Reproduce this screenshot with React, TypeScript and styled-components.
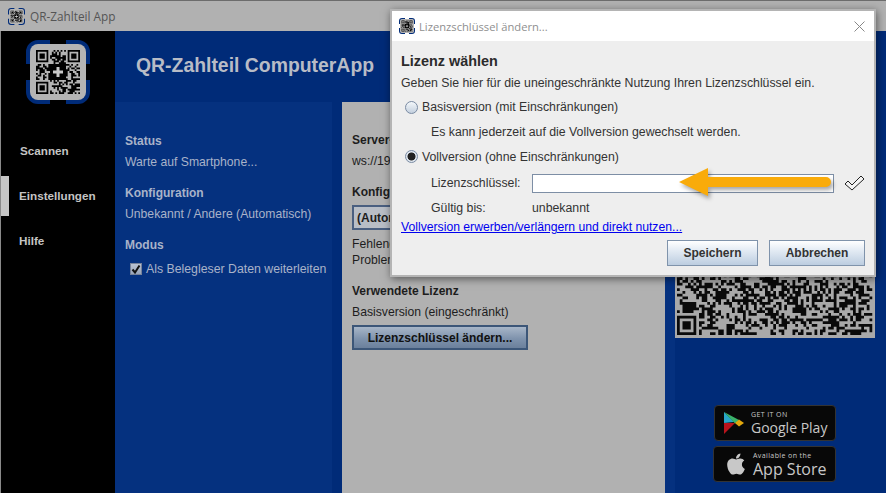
import React from 'react';
import styled, { createGlobalStyle } from 'styled-components';
import { FaApple } from 'react-icons/fa';

const GlobalStyle = createGlobalStyle`
  html, body {
    margin: 0;
    padding: 0;
    background: #000;
    overflow: hidden;
  }
  * {
    box-sizing: border-box;
  }
`;

const qrPath = (cells: number, seed: number, x0: number, y0: number, unit: number) => {
  let s = seed;
  const next = () => {
    s = (s * 1664525 + 1013904223) % 4294967296;
    return s / 4294967296;
  };
  const inFinder = (x: number, y: number) =>
    (x < 8 && y < 8) || (x >= cells - 8 && y < 8) || (x < 8 && y >= cells - 8);
  const mid = cells / 2;
  let d = '';
  const box = (x: number, y: number, w: number, h: number) => {
    d += `M${x0 + x * unit} ${y0 + y * unit}h${w * unit}v${h * unit}h${-w * unit}z`;
  };
  for (let y = 0; y < cells; y++) {
    for (let x = 0; x < cells; x++) {
      if (inFinder(x, y)) continue;
      if (cells < 40 && Math.abs(x - mid + 0.5) < 5 && Math.abs(y - mid + 0.5) < 5) continue;
      if (next() > 0.52) box(x, y, 1, 1);
    }
  }
  const finder = (x: number, y: number) => {
    box(x, y, 7, 1);
    box(x, y + 6, 7, 1);
    box(x, y + 1, 1, 5);
    box(x + 6, y + 1, 1, 5);
    box(x + 2, y + 2, 3, 3);
  };
  finder(0, 0);
  finder(cells - 7, 0);
  finder(0, cells - 7);
  return d;
};

const LOGO_QR = qrPath(25, 77, 10, 10, 1.76);
const BIG_QR = qrPath(71, 4242, 2, 1.75, 2.75);

const AppLogo: React.FC<{ size: number }> = ({ size }) => (
  <svg width={size} height={size} viewBox="0 0 64 64">
    <g fill="none" stroke="#002b78" strokeWidth="6">
      <path d="M3 24V12a9 9 0 0 1 9-9h12" />
      <path d="M40 3h12a9 9 0 0 1 9 9v12" />
      <path d="M61 40v12a9 9 0 0 1-9 9H40" />
      <path d="M24 61H12a9 9 0 0 1-9-9V40" />
    </g>
    <rect x="4" y="4" width="56" height="56" rx="8" fill="#b4b4b4" />
    <path d={LOGO_QR} fill="#000" />
    <rect x="24" y="24" width="16" height="16" fill="#000" />
    <path d="M30.500 27h3v3.500H37v3h-3.500V37h-3v-3.500H27v-3h3.500z" fill="#c8c8c8" />
  </svg>
);

const AppWindow = styled.div`
  position: relative;
  width: 886px;
  height: 493px;
  overflow: hidden;
  display: flex;
  flex-direction: column;
  border-top: 1px solid #6c6c6c;
  font-family: 'Liberation Sans', Arial, sans-serif;
  font-size: 12px;
`;

const TitleBar = styled.div`
  height: 30px;
  flex: none;
  display: flex;
  align-items: center;
  gap: 5px;
  padding-left: 8px;
  background: #b1b1b1;
  color: #555;
  font-family: 'Open Sans', 'Liberation Sans', sans-serif;
  font-size: 11.8px;
`;

const WindowBody = styled.div`
  flex: 1;
  display: flex;
  min-height: 0;
  border-left: 1px solid #8a8a8a;
`;

const Sidebar = styled.nav`
  width: 114px;
  flex: none;
  background: #000;
  display: flex;
  flex-direction: column;
`;

const LogoSlot = styled.div`
  height: 97px;
  padding: 9px 0 0 25px;
`;

const NavItem = styled.div<{ $active?: boolean; $inset?: number }>`
  height: 45px;
  display: flex;
  align-items: center;
  padding-left: ${(p) => (p.$active ? '0' : `${p.$inset ?? 18}px`)};
  color: #c4c4c4;
  font-weight: bold;
  font-size: 11.7px;
  &::before {
    content: '';
    display: ${(p) => (p.$active ? 'block' : 'none')};
    width: 8px;
    height: 40px;
    margin-right: 10px;
    background: #c6c6c6;
  }
`;

const Main = styled.div`
  flex: 1;
  display: flex;
  flex-direction: column;
  background: #002b78;
`;

const Header = styled.header`
  height: 71px;
  flex: none;
  padding: 22px 0 0 21px;
  color: #b8bcc6;
  font-size: 19.4px;
  line-height: 24px;
  font-weight: bold;
`;

const Columns = styled.div`
  flex: 1;
  display: flex;
  min-height: 0;
`;

const StatusPanel = styled.section`
  width: 217px;
  flex: none;
  background: #05317f;
  padding: 31px 0 0 10px;
  color: #a9b3c9;
`;

const Label = styled.div<{ $gap?: number }>`
  font-weight: bold;
  font-size: 12px;
  line-height: 16px;
  margin-top: ${(p) => p.$gap ?? 0}px;
`;

const Value = styled.div<{ $flush?: boolean }>`
  font-size: 12.2px;
  line-height: 16px;
  margin: ${(p) => (p.$flush ? '5px 0 0' : '5px 0 15px')};
  white-space: nowrap;
`;

const CheckRow = styled.label`
  display: flex;
  align-items: center;
  gap: 4px;
  margin: 9px 0 0 5px;
  font-size: 12.3px;
  white-space: nowrap;
`;

const CheckBox = styled.span`
  width: 12px;
  height: 12px;
  display: flex;
  align-items: center;
  justify-content: center;
  background: linear-gradient(#b9c2d2, #9aa6ba);
  border: 1px solid #76829a;
`;

const GrayPanel = styled.section`
  width: 323px;
  flex: none;
  margin-left: 10px;
  background: #b1b1b1;
  padding: 30px 0 0 10px;
  color: #1d1d1d;
`;

const SelectBox = styled.div`
  width: 300px;
  height: 25px;
  margin-top: 5px;
  padding-left: 3px;
  display: flex;
  align-items: center;
  border: 2px solid #4a5f80;
  background: #b9bec6;
  font-weight: bold;
`;

const NoteGroup = styled.div`
  margin-top: 6px;
`;

const Note = styled.div`
  font-size: 12.2px;
  line-height: 16px;
  white-space: nowrap;
`;

const LicenseButton = styled.button`
  width: 176px;
  height: 25px;
  margin-top: 5px;
  padding: 0;
  display: block;
  border: 2px solid #3c5678;
  background: linear-gradient(#a8b6c8, #7f93ad 55%, #6b809c);
  font: bold 12px 'Liberation Sans', Arial, sans-serif;
  color: #111;
`;

const StoreColumn = styled.aside`
  flex: 1;
  border-left: 10px solid #05317f;
  padding: 36px 0 0 0;
  display: flex;
  flex-direction: column;
`;

const QrCard = styled.div`
  width: 200px;
  height: 200px;
  flex: none;
  background: #a9a9a9;
`;

const Badges = styled.div`
  margin: 67px 0 0 38px;
  display: flex;
  flex-direction: column;
  align-items: flex-end;
  gap: 5px;
  width: 123px;
`;

const Badge = styled.div<{ $apple?: boolean }>`
  width: ${(p) => (p.$apple ? 123 : 122)}px;
  height: 36px;
  display: flex;
  align-items: center;
  gap: ${(p) => (p.$apple ? 5 : 6)}px;
  padding-left: ${(p) => (p.$apple ? 10 : 8)}px;
  background: #080808;
  border: 1px solid #333;
  border-radius: 4px;
  color: #c8c8c8;
  font-family: 'Open Sans', 'Liberation Sans', sans-serif;
`;

const BadgeText = styled.div`
  display: flex;
  flex-direction: column;
`;

const BadgeSmall = styled.span`
  font-size: 7px;
  line-height: 10px;
  letter-spacing: 0.4px;
  white-space: nowrap;
`;

const BadgeBig = styled.span<{ $apple?: boolean }>`
  font-size: ${(p) => (p.$apple ? 16 : 14)}px;
  line-height: ${(p) => (p.$apple ? 17 : 16)}px;
  white-space: nowrap;
`;

const Dialog = styled.div`
  position: absolute;
  left: 390px;
  top: 8px;
  width: 486px;
  height: 268px;
  background: #eeeeee;
  border: 2px solid #b4b4b4;
  box-shadow: 1px 2px 8px rgba(0, 0, 0, 0.5);
  color: #333;
  display: flex;
  flex-direction: column;
`;

const DialogTitle = styled.div`
  height: 30px;
  flex: none;
  background: #fff;
  display: flex;
  align-items: center;
  gap: 4px;
  padding: 0 8px 0 7px;
  color: #8f8f8f;
  font-family: 'Open Sans', 'Liberation Sans', sans-serif;
  font-size: 11.2px;
`;

const CloseIcon = styled.svg`
  margin-left: auto;
  margin-right: 1px;
`;

const DialogBody = styled.div`
  flex: 1;
  padding: 12px 9px 0 9px;
  font-size: 12.3px;
  display: flex;
  flex-direction: column;
`;

const DialogHeading = styled.div`
  font-size: 14.4px;
  line-height: 16px;
  margin-bottom: 1px;
  font-weight: bold;
  color: #2b2b2b;
`;

const DialogLine = styled.div<{ $indent?: number; $height?: number }>`
  height: ${(p) => p.$height ?? 25}px;
  display: flex;
  align-items: center;
  padding-left: ${(p) => p.$indent ?? 0}px;
  white-space: nowrap;
`;

const Radio = styled.span<{ $on?: boolean }>`
  width: 13px;
  height: 13px;
  margin-right: 4px;
  flex: none;
  border-radius: 50%;
  border: 1px solid #7a8ba3;
  background: ${(p) =>
    p.$on
      ? 'radial-gradient(circle, #222 0 3.6px, #dfe6ee 4.4px)'
      : 'linear-gradient(#f4f7fa, #c3d0de)'};
`;

const FieldLabel = styled.span`
  width: 101px;
  flex: none;
`;

const KeyInput = styled.div`
  width: 302px;
  height: 19px;
  flex: none;
  background: #fff;
  border: 1px solid #7d8ea5;
`;

const CheckSlot = styled.span`
  margin-left: 10px;
  display: flex;
`;

const BuyLink = styled.a`
  color: #0000ee;
  text-decoration: underline;
  font-size: 12.2px;
  line-height: 16px;
  display: block;
`;

const DialogActions = styled.div`
  margin-top: 5px;
  display: flex;
  justify-content: flex-end;
  gap: 11px;
`;

const DialogButton = styled.button<{ $w: number }>`
  width: ${(p) => p.$w}px;
  height: 26px;
  padding: 0;
  border: 1px solid #7f93ab;
  background: linear-gradient(#fff, #e6edf5 35%, #bccde0);
  font: bold 12px 'Liberation Sans', Arial, sans-serif;
  color: #333;
`;

const Arrow = styled.svg`
  position: absolute;
  left: 676px;
  top: 164px;
  filter: drop-shadow(2px 3px 2px rgba(0, 0, 0, 0.35));
`;

const App: React.FC = () => (
  <>
    <GlobalStyle />
    <AppWindow>
      <TitleBar>
        <AppLogo size={17} />
        <span>QR-Zahlteil App</span>
      </TitleBar>
      <WindowBody>
        <Sidebar>
          <LogoSlot>
            <AppLogo size={64} />
          </LogoSlot>
          <NavItem $inset={19}>Scannen</NavItem>
          <NavItem $active>Einstellungen</NavItem>
          <NavItem>Hilfe</NavItem>
        </Sidebar>
        <Main>
          <Header>QR-Zahlteil ComputerApp</Header>
          <Columns>
            <StatusPanel>
              <Label>Status</Label>
              <Value>Warte auf Smartphone...</Value>
              <Label>Konfiguration</Label>
              <Value>Unbekannt / Andere (Automatisch)</Value>
              <Label>Modus</Label>
              <CheckRow>
                <CheckBox>
                  <svg width="10" height="10" viewBox="0 0 10 10">
                    <path d="M1.500 5.500 4 8.500 8.500 1.500" fill="none" stroke="#111" strokeWidth="2" />
                  </svg>
                </CheckBox>
                Als Belegleser Daten weiterleiten
              </CheckRow>
            </StatusPanel>
            <GrayPanel>
              <Label>Server-Adresse</Label>
              <Value>ws://192.168.0.1:8080</Value>
              <Label>Konfiguration</Label>
              <SelectBox>(Automatisch)</SelectBox>
              <NoteGroup>
                <Note>Fehlende Verbindung?</Note>
                <Note>Probleme beheben</Note>
              </NoteGroup>
              <Label $gap={15}>Verwendete Lizenz</Label>
              <Value $flush>Basisversion (eingeschränkt)</Value>
              <LicenseButton>Lizenzschlüssel ändern...</LicenseButton>
            </GrayPanel>
            <StoreColumn>
              <QrCard>
                <svg width="200" height="200" viewBox="0 0 200 200">
                  <path d={BIG_QR} fill="#0a0a0a" />
                </svg>
              </QrCard>
              <Badges>
                <Badge>
                  <svg width="22" height="24" viewBox="0 0 22 24">
                    <path d="M1 1v11l10-1z" fill="#27a6c9" />
                    <path d="M1 1l15 8-4 3.500z" fill="#3bb36a" />
                    <path d="M1 23V12h11z" fill="#b8141c" />
                    <path d="M16 8.500l5 3.500-5 3.500-4-3.500z" fill="#e3a70c" />
                  </svg>
                  <BadgeText>
                    <BadgeSmall>GET IT ON</BadgeSmall>
                    <BadgeBig>Google Play</BadgeBig>
                  </BadgeText>
                </Badge>
                <Badge $apple>
                  <FaApple size={24} color="#c8c8c8" />
                  <BadgeText>
                    <BadgeSmall>Available on the</BadgeSmall>
                    <BadgeBig $apple>App Store</BadgeBig>
                  </BadgeText>
                </Badge>
              </Badges>
            </StoreColumn>
          </Columns>
        </Main>
      </WindowBody>

      <Dialog>
        <DialogTitle>
          <AppLogo size={16} />
          <span>Lizenzschlüssel ändern...</span>
          <CloseIcon width="11" height="11" viewBox="0 0 11 11">
            <path d="M.5.5l10 10M10.500.5l-10 10" stroke="#888" strokeWidth="1" fill="none" />
          </CloseIcon>
        </DialogTitle>
        <DialogBody>
          <DialogHeading>Lizenz wählen</DialogHeading>
          <DialogLine $height={25}>
            Geben Sie hier für die uneingeschränkte Nutzung Ihren Lizenzschlüssel ein.
          </DialogLine>
          <DialogLine $indent={4} $height={24}>
            <Radio />
            Basisversion (mit Einschränkungen)
          </DialogLine>
          <DialogLine $indent={30} $height={25}>
            Es kann jederzeit auf die Vollversion gewechselt werden.
          </DialogLine>
          <DialogLine $indent={4} $height={25}>
            <Radio $on />
            Vollversion (ohne Einschränkungen)
          </DialogLine>
          <DialogLine $indent={30} $height={28}>
            <FieldLabel>Lizenzschlüssel:</FieldLabel>
            <KeyInput />
            <CheckSlot>
              <svg width="21" height="16" viewBox="0 0 21 16">
                <path d="M1 9l3-3 4 4 9-9 3 3L8 15z" fill="#f4f4f4" stroke="#222" strokeWidth="1" />
              </svg>
            </CheckSlot>
          </DialogLine>
          <DialogLine $indent={30} $height={22}>
            <FieldLabel>Gültig bis:</FieldLabel>
            <span>unbekannt</span>
          </DialogLine>
          <BuyLink>Vollversion erwerben/verlängern und direkt nutzen...</BuyLink>
          <DialogActions>
            <DialogButton $w={91}>Speichern</DialogButton>
            <DialogButton $w={96}>Abbrechen</DialogButton>
          </DialogActions>
        </DialogBody>
      </Dialog>

      <Arrow width="160" height="40" viewBox="0 0 160 40">
        <path d="M3 17 32 3v9h118a5 5 0 0 1 0 10H32v9z" fill="#f9ab0a" />
      </Arrow>
    </AppWindow>
  </>
);

export default App;
